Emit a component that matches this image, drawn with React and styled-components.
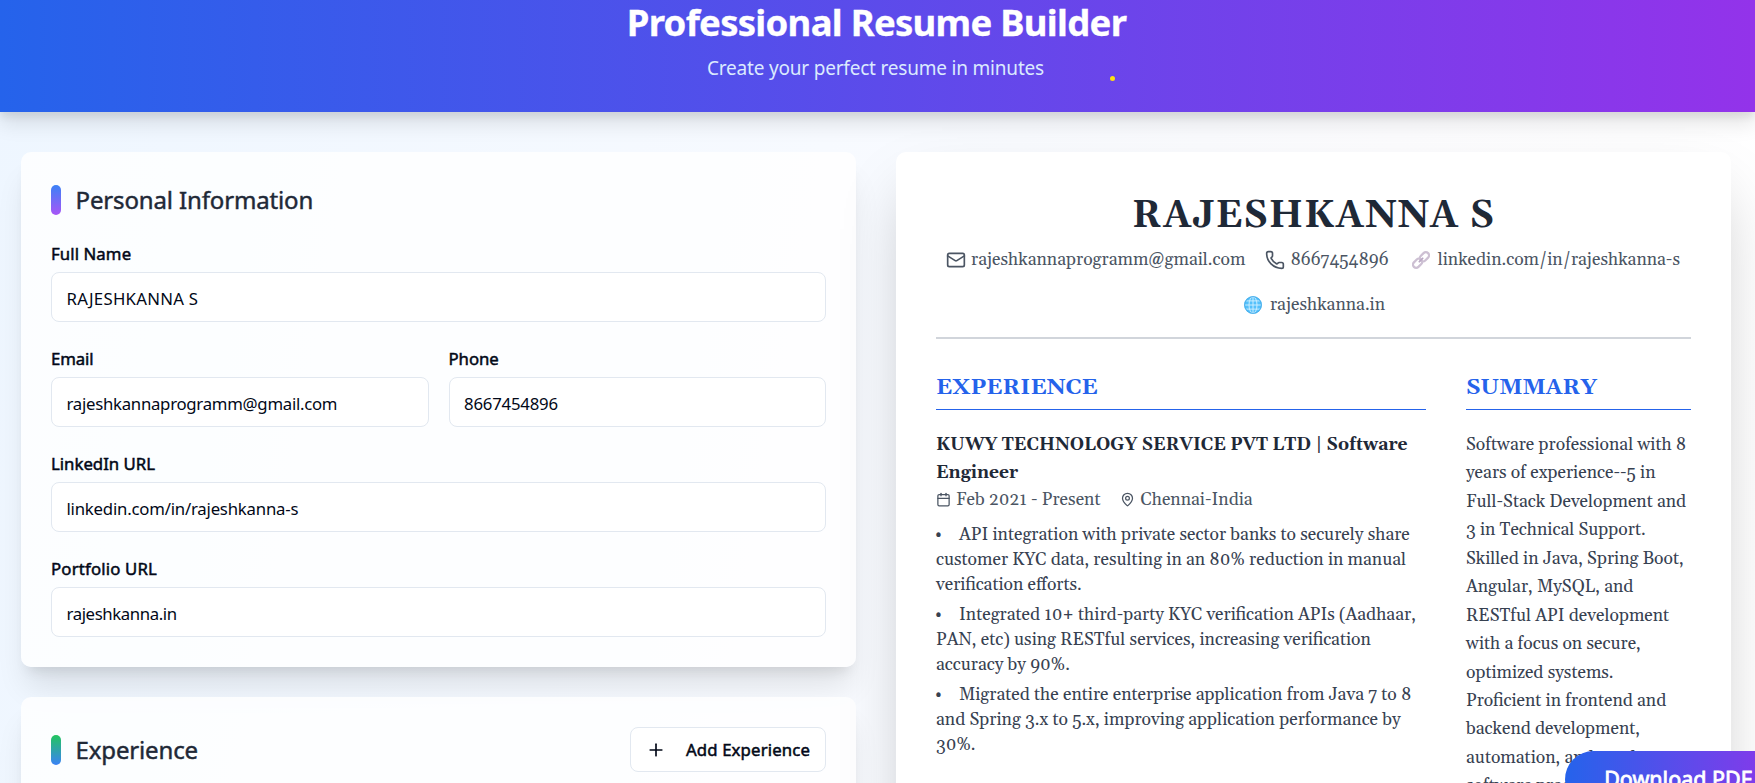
import React from "react";
import styled, { createGlobalStyle } from "styled-components";
import { Mail, Phone, Calendar, MapPin, Plus } from "lucide-react";

const sans = `"Noto Sans", "Open Sans", sans-serif`;
const serif = `Gelasio, "Liberation Serif", serif`;

const GlobalStyle = createGlobalStyle`
  *, *::before, *::after { box-sizing: border-box; }
  body { margin: 0; font-family: ${sans}; color: #020817; overflow: hidden; }
  h1, h2, h3, p, ul { margin: 0; padding: 0; }
`;

const Page = styled.div`
  height: 783px;
  overflow: hidden;
  background: linear-gradient(100deg, #eef6ff 0%, #f7faff 45%, #fdfdff 75%, #ffffff 100%);
`;

const Header = styled.header`
  position: relative;
  height: 112px;
  padding-top: 1px;
  text-align: center;
  background: linear-gradient(to right, #2563eb, #9333ea);
  box-shadow: 0 12px 19px 0 rgba(0, 0, 0, 0.1), 0 5px 7.5px 0 rgba(0, 0, 0, 0.07);
`;

const HeaderTitle = styled.h1`
  font-size: 36.5px;
  font-weight: 700;
  line-height: 42px;
  letter-spacing: -0.72px;
  color: #fff;
  padding-right: 2px;
  -webkit-text-stroke: 0.3px #fff;
`;

const HeaderSubtitle = styled.p`
  margin-top: 10px;
  font-size: 19px;
  line-height: 31px;
  letter-spacing: -0.2px;
  color: #dbeafe;
  padding-right: 4px;
`;

const Spark = styled.span`
  position: absolute;
  left: 1110px;
  top: 76px;
  width: 5px;
  height: 5px;
  border-radius: 50%;
  background: #fde011;
`;

const Workspace = styled.main`
  display: grid;
  grid-template-columns: 1fr 1fr;
  gap: 40px;
  padding: 40px 24px 0 21px;
`;

const FormColumn = styled.div`
  display: flex;
  flex-direction: column;
  gap: 30px;
`;

const Card = styled.section`
  padding: 30px;
  border-radius: 10px;
  background: rgba(255, 255, 255, 0.8);
  box-shadow: 0 25px 31px -6px rgba(0, 0, 0, 0.1), 0 10px 12.5px -7.5px rgba(0, 0, 0, 0.1);
`;

const CardHead = styled.div`
  display: flex;
  align-items: center;
  justify-content: space-between;
  min-height: 36px;
`;

const CardTitle = styled.h2`
  display: flex;
  align-items: center;
  gap: 14.5px;
  font-size: 24px;
  font-weight: 400;
  line-height: 36px;
  letter-spacing: -0.14px;
  color: #1f2937;
  -webkit-text-stroke: 0.45px #1f2937;
`;

const Accent = styled.span`
  width: 10px;
  height: 30px;
  border-radius: 5px;
  background: linear-gradient(to bottom, ${(p) => p.$from}, ${(p) => p.$to});
`;

const Fields = styled.div`
  display: grid;
  grid-template-columns: 1fr 1fr;
  gap: 24px 20px;
  margin-top: 23px;
`;

const FieldBox = styled.label`
  display: flex;
  flex-direction: column;
  gap: 6px;
  grid-column: ${(p) => (p.$wide ? "1 / -1" : "auto")};
`;

const FieldLabel = styled.span`
  font-size: 16.75px;
  line-height: 25px;
  letter-spacing: ${(p) => p.$track}px;
  -webkit-text-stroke: 0.5px #020817;
`;

const Input = styled.input`
  width: 100%;
  height: 50px;
  padding: 2px 14.5px 0;
  border: 1px solid #e2e8f0;
  border-radius: 8px;
  background: #fff;
  color: #020817;
  font-family: ${sans};
  font-size: 16.75px;
  letter-spacing: ${(p) => p.$track}px;
  outline: none;
`;

const AddButton = styled.button`
  display: flex;
  align-items: center;
  justify-content: space-between;
  width: 196px;
  height: 45px;
  padding: 0 15px;
  border: 1px solid #e2e8f0;
  border-radius: 8px;
  background: #fff;
  color: #020817;
  font-family: ${sans};
  font-size: 16.75px;
  letter-spacing: 0.14px;
  -webkit-text-stroke: 0.5px #020817;
`;

const Resume = styled.article`
  height: 1300px;
  padding: 42px 40px 40px;
  border-radius: 10px;
  background: #fff;
  font-family: ${serif};
  font-size: 17.5px;
  box-shadow: 0 31px 62px -15px rgba(0, 0, 0, 0.25);
`;

const ResumeHead = styled.header`
  padding-bottom: 19px;
  border-bottom: 2px solid #d1d5db;
`;

const Name = styled.h1`
  font-size: 37.5px;
  line-height: 45px;
  text-align: center;
  letter-spacing: 0.94px;
  color: #1f2937;
`;

const Contacts = styled.div`
  display: flex;
  flex-wrap: wrap;
  justify-content: center;
  gap: 20px;
  margin-top: 9px;
  padding-right: 1px;
  line-height: 25px;
  color: #4b5563;
`;

const Contact = styled.span`
  display: flex;
  align-items: center;
  gap: 5px;

  svg { margin-top: -2px; }
`;

const Emoji = styled.span`
  display: flex;
  justify-content: center;
  width: 24px;
`;

const ResumeBody = styled.div`
  display: grid;
  grid-template-columns: 490px 1fr;
  gap: 40px;
  margin-top: 30px;
`;

const SectionTitle = styled.h2`
  padding: 1px 0 4px;
  border-bottom: 1px solid #2563eb;
  margin-bottom: 21px;
  font-size: 22.5px;
  line-height: 35px;
  color: #2563eb;
`;

const JobTitle = styled.h3`
  font-size: 17.5px;
  line-height: 28.2px;
  color: #1f2937;
`;

const JobMeta = styled.div`
  display: flex;
  gap: 20px;
  margin-top: 0.6px;
  line-height: 25px;
  color: #4b5563;
`;

const Bullets = styled.ul`
  display: flex;
  flex-direction: column;
  gap: 5px;
  margin-top: 10.2px;
  list-style: none;
  line-height: 25px;
  color: #374151;
`;

const Dot = styled.span`
  display: inline-block;
  width: 24px;
  margin-left: -1px;
`;

const Line = styled.span`
  display: block;
  white-space: nowrap;
`;

const Summary = styled.p`
  line-height: 28.44px;
  color: #374151;
`;

const Download = styled.button`
  position: fixed;
  left: 1565px;
  top: 751px;
  width: 234px;
  height: 57px;
  padding: 0 8px 2px 0;
  border: 0;
  border-radius: 29px;
  background: linear-gradient(to right, #2563eb, #9333ea);
  color: #fff;
  font-family: ${sans};
  font-size: 21.5px;
  white-space: nowrap;
  -webkit-text-stroke: 0.8px #fff;
`;

const LinkIcon = () => (
  <svg width="18" height="18" viewBox="0 0 18 18" fill="none" stroke="#cdc0d3" strokeWidth="2.3">
    <rect x="7.2" y="2.6" width="10.4" height="6.4" rx="3.2" transform="rotate(-45 12.4 5.8)" />
    <rect x="0.4" y="9" width="10.4" height="6.4" rx="3.2" transform="rotate(-45 5.6 12.2)" />
    <path d="M6.8 11.2 11.2 6.8" stroke="#b9a8c3" strokeWidth="1.6" />
  </svg>
);

const GlobeIcon = () => (
  <svg width="18" height="18" viewBox="0 0 18 18">
    <circle cx="9" cy="9" r="8.8" fill="#55c1fb" />
    <g fill="none" stroke="#d5f1ff" strokeWidth="0.9">
      <ellipse cx="9" cy="9" rx="4" ry="8.2" />
      <path d="M9 .6v16.8M.6 9h16.8M2.2 4.9h13.6M2.2 13.1h13.6" />
    </g>
    <circle cx="9" cy="9" r="8.4" fill="none" stroke="#4aaeea" strokeWidth="1" />
  </svg>
);

const fields = [
  { label: "Full Name", value: "RAJESHKANNA S", wide: true, lt: 0.1, vt: 0.27 },
  { label: "Email", value: "rajeshkannaprogramm@gmail.com", lt: -0.1, vt: -0.27 },
  { label: "Phone", value: "8667454896", lt: -0.05, vt: -0.2 },
  { label: "LinkedIn URL", value: "linkedin.com/in/rajeshkanna-s", wide: true, lt: 0, vt: -0.21 },
  { label: "Portfolio URL", value: "rajeshkanna.in", wide: true, lt: 0.18, vt: -0.4 },
];

const bullets = [
  [
    "API integration with private sector banks to securely share",
    "customer KYC data, resulting in an 80% reduction in manual",
    "verification efforts.",
  ],
  [
    "Integrated 10+ third-party KYC verification APIs (Aadhaar,",
    "PAN, etc) using RESTful services, increasing verification",
    "accuracy by 90%.",
  ],
  [
    "Migrated the entire enterprise application from Java 7 to 8",
    "and Spring 3.x to 5.x, improving application performance by",
    "30%.",
  ],
];

const summary = [
  "Software professional with 8",
  "years of experience--5 in",
  "Full-Stack Development and",
  "3 in Technical Support.",
  "Skilled in Java, Spring Boot,",
  "Angular, MySQL, and",
  "RESTful API development",
  "with a focus on secure,",
  "optimized systems.",
  "Proficient in frontend and",
  "backend development,",
  "automation, and good",
  "software practices.",
];

export default function App() {
  return (
    <Page>
      <GlobalStyle />
      <Header>
        <HeaderTitle>Professional Resume Builder</HeaderTitle>
        <HeaderSubtitle>Create your perfect resume in minutes</HeaderSubtitle>
        <Spark />
      </Header>
      <Workspace>
        <FormColumn>
          <Card>
            <CardHead>
              <CardTitle>
                <Accent $from="#3b82f6" $to="#a855f7" />
                Personal Information
              </CardTitle>
            </CardHead>
            <Fields>
              {fields.map((f) => (
                <FieldBox key={f.label} $wide={f.wide}>
                  <FieldLabel $track={f.lt}>{f.label}</FieldLabel>
                  <Input $track={f.vt} defaultValue={f.value} />
                </FieldBox>
              ))}
            </Fields>
          </Card>
          <Card>
            <CardHead>
              <CardTitle>
                <Accent $from="#22c55e" $to="#3b82f6" />
                Experience
              </CardTitle>
              <AddButton>
                <Plus size={20} strokeWidth={2} />
                Add Experience
              </AddButton>
            </CardHead>
          </Card>
        </FormColumn>
        <Resume>
          <ResumeHead>
            <Name>RAJESHKANNA S</Name>
            <Contacts>
              <Contact>
                <Mail size={20} />
                rajeshkannaprogramm@gmail.com
              </Contact>
              <Contact>
                <Phone size={20} />
                8667454896
              </Contact>
              <Contact>
                <Emoji>
                  <LinkIcon />
                </Emoji>
                linkedin.com/in/rajeshkanna-s
              </Contact>
              <Contact>
                <Emoji>
                  <GlobeIcon />
                </Emoji>
                rajeshkanna.in
              </Contact>
            </Contacts>
          </ResumeHead>
          <ResumeBody>
            <section>
              <SectionTitle>EXPERIENCE</SectionTitle>
              <JobTitle>
                <Line>KUWY TECHNOLOGY SERVICE PVT LTD | Software</Line>
                <Line>Engineer</Line>
              </JobTitle>
              <JobMeta>
                <Contact>
                  <Calendar size={15} />
                  Feb 2021 - Present
                </Contact>
                <Contact>
                  <MapPin size={15} />
                  Chennai-India
                </Contact>
              </JobMeta>
              <Bullets>
                {bullets.map((lines) => (
                  <li key={lines[0]}>
                    {lines.map((text, i) => (
                      <Line key={text}>
                        {i === 0 && <Dot>•</Dot>}
                        {text}
                      </Line>
                    ))}
                  </li>
                ))}
              </Bullets>
            </section>
            <section>
              <SectionTitle>SUMMARY</SectionTitle>
              <Summary>
                {summary.map((text) => (
                  <Line key={text}>{text}</Line>
                ))}
              </Summary>
            </section>
          </ResumeBody>
        </Resume>
      </Workspace>
      <Download>Download PDF</Download>
    </Page>
  );
}
